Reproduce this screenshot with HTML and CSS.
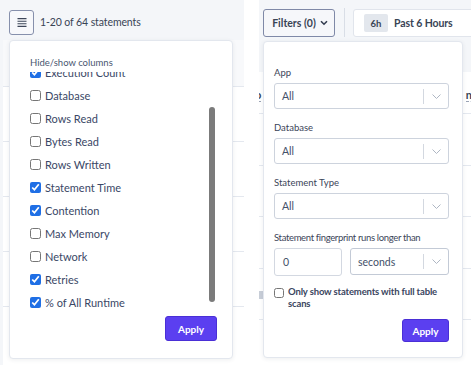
FILE: index.html
```html
<!DOCTYPE html>
<html>
    <head>
        <meta charset="utf-8">
        <title>Statements</title>
        <link rel="stylesheet" href="styles.css">
    </head>
    <body>
        <div class="stage">
            <section class="shot shot-cols">
                <div class="toolbar">
                    <button class="menu-btn">
                        <svg width="10" height="9" viewBox="0 0 10 9">
                            <path d="M0.5 0.6h9M0.5 3.2h9M0.5 5.8h9M0.5 8.4h9" stroke="#3d4659" stroke-width="1.1" fill="none"/>
                        </svg>
                    </button>
                    <span class="count">1-20 of 64 statements</span>
                </div>
                <div class="grid">
                    <div class="grid-head"></div>
                    <div class="grid-row"></div>
                    <div class="grid-row"></div>
                    <div class="grid-row"></div>
                    <div class="grid-row"></div>
                    <div class="grid-row"></div>
                </div>

                <div class="popup cols-popup">
                    <div class="popup-title">Hide/show columns</div>
                    <div class="cols-body">
                        <div class="cols-list">
                            <ul>
                                <li class="col-item"><input type="checkbox" checked> Execution Count</li>
                                <li class="col-item"><input type="checkbox"> Database</li>
                                <li class="col-item"><input type="checkbox"> Rows Read</li>
                                <li class="col-item"><input type="checkbox"> Bytes Read</li>
                                <li class="col-item"><input type="checkbox"> Rows Written</li>
                                <li class="col-item"><input type="checkbox" checked> Statement Time</li>
                                <li class="col-item"><input type="checkbox" checked> Contention</li>
                                <li class="col-item"><input type="checkbox"> Max Memory</li>
                                <li class="col-item"><input type="checkbox"> Network</li>
                                <li class="col-item"><input type="checkbox" checked> Retries</li>
                                <li class="col-item"><input type="checkbox" checked> % of All Runtime</li>
                            </ul>
                        </div>
                        <div class="scroll-track"><div class="scroll-thumb"></div></div>
                    </div>
                    <div class="popup-foot">
                        <button class="apply apply-cols">Apply</button>
                    </div>
                </div>
            </section>

            <section class="shot shot-filters">
                <div class="toolbar">
                    <button class="filter-btn">
                        Filters (0)
                        <svg width="8" height="6" viewBox="0 0 8 6">
                            <path d="M1 1.2l3 3 3-3" stroke="#343d50" stroke-width="1.6" fill="none"/>
                        </svg>
                    </button>
                    <div class="divider"></div>
                    <div class="range">
                        <span class="range-tag">6h</span>
                        <span class="range-label">Past 6 Hours</span>
                    </div>
                </div>
                <div class="grid">
                    <div class="grid-head">
                        <span class="th th-left">o</span>
                        <span class="th th-right">nce</span>
                    </div>
                    <div class="grid-row"></div>
                    <div class="grid-row"></div>
                    <div class="grid-row"></div>
                    <div class="grid-row"><span class="row-box"></span></div>
                    <div class="grid-row"></div>
                </div>

                <div class="popup filters-popup">
                    <div class="field">
                        <div class="field-label">App</div>
                        <div class="select">
                            <span class="select-val">All</span>
                            <span class="select-sep"></span>
                            <span class="select-arrow">
                                <svg width="9" height="5" viewBox="0 0 9 5"><path d="M0.5 0.5l4 4 4-4" stroke="#aeb6c3" stroke-width="1" fill="none"/></svg>
                            </span>
                        </div>
                    </div>
                    <div class="field">
                        <div class="field-label">Database</div>
                        <div class="select">
                            <span class="select-val">All</span>
                            <span class="select-sep"></span>
                            <span class="select-arrow">
                                <svg width="9" height="5" viewBox="0 0 9 5"><path d="M0.5 0.5l4 4 4-4" stroke="#aeb6c3" stroke-width="1" fill="none"/></svg>
                            </span>
                        </div>
                    </div>
                    <div class="field">
                        <div class="field-label">Statement Type</div>
                        <div class="select">
                            <span class="select-val">All</span>
                            <span class="select-sep"></span>
                            <span class="select-arrow">
                                <svg width="9" height="5" viewBox="0 0 9 5"><path d="M0.5 0.5l4 4 4-4" stroke="#aeb6c3" stroke-width="1" fill="none"/></svg>
                            </span>
                        </div>
                    </div>
                    <div class="field">
                        <div class="field-label field-label-long">Statement fingerprint runs longer than</div>
                        <div class="duration">
                            <div class="num-input">0</div>
                            <div class="select select-unit">
                                <span class="select-val">seconds</span>
                                <span class="select-sep"></span>
                                <span class="select-arrow">
                                    <svg width="9" height="5" viewBox="0 0 9 5"><path d="M0.5 0.5l4 4 4-4" stroke="#aeb6c3" stroke-width="1" fill="none"/></svg>
                                </span>
                            </div>
                        </div>
                    </div>
                    <label class="scan-check">
                        <input type="checkbox">
                        <span>Only show statements with full table scans</span>
                    </label>
                    <div class="popup-foot">
                        <button class="apply apply-filters">Apply</button>
                    </div>
                </div>
            </section>
        </div>
    </body>
</html>
```

FILE: styles.css
```css
*{
    box-sizing: border-box;
}
body{
    margin: 0;
    background-color: #fff;
    font-family: Lato, "Noto Sans", sans-serif;
    color: #394455;
}
.stage{
    display: flex;
    width: 475px;
    height: 365px;
    overflow: hidden;
}
.shot{
    position: relative;
    height: 365px;
    overflow: hidden;
}
.shot-cols{
    width: 244px;
    border-left: 3px solid #f4f6f9;
}
.shot-filters{
    width: 212px;
    margin-left: 15px;
}

/* top bars */
.toolbar{
    display: flex;
    align-items: flex-start;
    background-color: #f4f6f9;
}
.shot-cols .toolbar{
    height: 40px;
    padding: 10px 0 0 6px;
    gap: 6px;
}
.shot-filters .toolbar{
    height: 72px;
    padding: 9px 0 0 4px;
}
.menu-btn{
    width: 25px;
    height: 25px;
    padding: 0;
    border: 1px solid #8690ac;
    border-radius: 3px;
    background-color: #f7f8fb;
    display: flex;
    align-items: center;
    justify-content: center;
}
.count{
    font-size: 10.5px;
    letter-spacing: -0.1px;
    line-height: 25px;
    color: #394455;
}
.filter-btn{
    flex: none;
    width: 72px;
    height: 28px;
    padding: 0 0 0 2px;
    border: 1px solid #7f89a7;
    border-radius: 3px;
    background-color: #f6f7fa;
    font-family: Lato, sans-serif;
    font-size: 10.5px;
    font-weight: 700;
    color: #394455;
    display: flex;
    align-items: center;
    justify-content: center;
    gap: 4px;
}
.divider{
    flex: none;
    width: 1px;
    height: 29px;
    margin: -1px 8px 0 9px;
    background-color: #d9dee6;
}
.range{
    flex: none;
    width: 160px;
    height: 28px;
    padding-left: 10px;
    border: 1px solid #e1e5ec;
    border-radius: 3px;
    background-color: #fff;
    display: flex;
    align-items: center;
    gap: 6px;
}
.range-tag{
    width: 24px;
    height: 18px;
    border-radius: 2px;
    background-color: #e3e7ed;
    font-size: 9.5px;
    font-weight: 700;
    display: flex;
    align-items: center;
    justify-content: center;
}
.range-label{
    font-size: 10.5px;
    font-weight: 700;
    letter-spacing: -0.1px;
    color: #394455;
}

/* table behind the popups */
.grid-row{
    border-top: 1px solid #e4e8ef;
}
.shot-cols .grid-head{
    height: 46px;
    background-color: #f8f9fb;
}
.shot-cols .grid-row{
    height: 55px;
}
.shot-filters .grid-head{
    height: 41px;
    padding-top: 6px;
    display: flex;
    align-items: center;
    justify-content: space-between;
}
.shot-filters .grid-row{
    height: 51.5px;
    position: relative;
}
.th{
    font-size: 11px;
    font-weight: 700;
    border-bottom: 1px dashed #9aa3b5;
    line-height: 12px;
}
.th-left{
    margin-left: -4px;
}
.th-right{
    margin-right: -12px;
}
.row-box{
    position: absolute;
    left: 0;
    top: 22px;
    width: 4px;
    height: 8px;
    background-color: #c8ced8;
}

/* popups */
.popup{
    position: absolute;
    background-color: #fff;
    border: 1px solid #e3e7ee;
    border-radius: 4px;
    box-shadow: 0 1px 4px rgba(40, 50, 70, 0.08);
}
.cols-popup{
    left: 6px;
    top: 40px;
    width: 224px;
    height: 319px;
    padding: 15px 15px 0 20px;
}
.popup-title{
    font-size: 9.5px;
    line-height: 13px;
    color: #4a5670;
}
.cols-body{
    display: flex;
    height: 242px;
    margin-top: 3px;
}
.cols-list{
    flex: 1;
    overflow: hidden;
}
.cols-list ul{
    margin: -11.5px 0 0;
    padding: 0;
    list-style: none;
}
.col-item{
    height: 23px;
    display: flex;
    align-items: center;
    gap: 4px;
    font-size: 11px;
    color: #3a4766;
}
.col-item input{
    width: 11px;
    height: 11px;
    margin: 0;
    accent-color: #1f6fe5;
}
.scroll-track{
    width: 6px;
    margin-right: 2px;
}
.scroll-thumb{
    margin-top: 35px;
    height: 195px;
    border-radius: 3px;
    background-color: #7b7b7b;
}
.popup-foot{
    display: flex;
    justify-content: flex-end;
}
.apply{
    padding: 0;
    border: 1px solid #4a2fd6;
    border-radius: 3px;
    background-color: #5b3ff0;
    color: #fff;
    font-family: Lato, sans-serif;
    font-size: 10px;
    font-weight: 700;
}
.apply-cols{
    width: 52px;
    height: 25px;
    margin-top: 2px;
}
.filters-popup{
    left: 4px;
    top: 41px;
    width: 200px;
    height: 317px;
    padding: 24px 13px 0 10px;
}
.field + .field{
    margin-top: 12px;
}
.field-label{
    font-size: 9.5px;
    line-height: 13px;
    margin-bottom: 4px;
    color: #3b4559;
}
.field-label-long{
    letter-spacing: -0.35px;
}
.select{
    height: 26px;
    padding-left: 7px;
    border: 1px solid #cdd3dd;
    border-radius: 3px;
    display: flex;
    align-items: center;
    font-size: 10.5px;
    color: #435069;
}
.select-val{
    flex: 1;
}
.select-sep{
    width: 1px;
    height: 15px;
    background-color: #d3d8e0;
}
.select-arrow{
    width: 24px;
    display: flex;
    align-items: center;
    justify-content: center;
}
.duration{
    display: flex;
    gap: 8px;
}
.num-input{
    width: 68px;
    height: 28px;
    padding-left: 8px;
    border: 1px solid #d3d8e1;
    border-radius: 3px;
    display: flex;
    align-items: center;
    font-size: 10.5px;
    color: #435069;
}
.select-unit{
    flex: 1;
    height: 27px;
    border-color: #c3cad6;
}
.scan-check{
    margin-top: 10px;
    display: flex;
    align-items: flex-start;
    gap: 4px;
    font-size: 9.5px;
    font-weight: 700;
    letter-spacing: -0.15px;
    line-height: 12px;
    color: #3a4560;
}
.scan-check input{
    flex: none;
    width: 10px;
    height: 10px;
    margin: 2px 0 0;
}
.apply-filters{
    width: 47px;
    height: 23px;
    margin-top: 9px;
}
```
